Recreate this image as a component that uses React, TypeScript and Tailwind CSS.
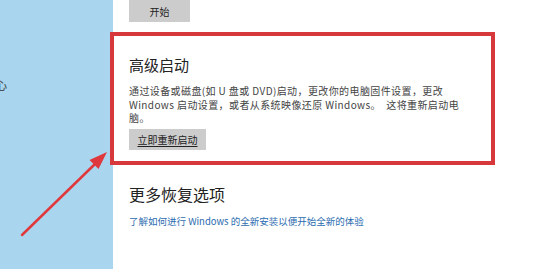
export default function App() {
  return (
    <div
      className="relative flex h-[269px] w-[560px] overflow-hidden bg-white text-[#333]"
      style={{ fontFamily: '"Noto Sans CJK SC", "Noto Sans", sans-serif' }}
    >
      {/* left nav */}
      <div className="w-[113px] shrink-0 bg-[#a9d5ee] pt-[78px]">
        <div className="-ml-[4px] text-[11px] leading-[14px] text-[#333]">心</div>
      </div>

      {/* settings content */}
      <div className="flex-1 pl-[16px]">
        <button className="flex h-[22px] w-[61px] items-center justify-center bg-[#cccccc] text-[10px] text-[#222]">
          开始
        </button>

        <div className="-ml-[19px] mt-[10px] w-[385px] border-[4px] border-[#d6383c] pb-[11px] pl-[15px] pt-[19px]">
          <h2 className="text-[15px] leading-[20px] text-[#222]">高级启动</h2>
          <p className="mt-[9px] whitespace-nowrap text-[10px] leading-[13.5px] tracking-[0.4px] text-[#444]">
            通过设备或磁盘(如 U 盘或 DVD)启动，更改你的电脑固件设置，更改
            <br />
            Windows 启动设置，或者从系统映像还原 Windows。&nbsp; 这将重新启动电
            <br />
            脑。
          </p>
          <button className="mt-[4px] flex h-[21px] w-[77px] items-center justify-center bg-[#cccccc] text-[10px] text-[#222] underline underline-offset-2">
            立即重新启动
          </button>
        </div>

        <h2 className="mt-[18px] text-[16px] leading-[22px] text-[#222]">更多恢复选项</h2>
        <a className="mt-[9px] block text-[9.5px] leading-[14px] text-[#2b6cb0]">
          了解如何进行 Windows 的全新安装以便开始全新的体验
        </a>
        <h2 className="mt-[37px] text-[16px] leading-[22px] text-[#222]">有疑问?</h2>
      </div>

      {/* annotation arrow */}
      <svg className="pointer-events-none absolute left-0 top-0" width="560" height="269">
        <line x1="22" y1="235" x2="95" y2="164" stroke="#e0393d" strokeWidth="2.5" strokeLinecap="round" />
        <polygon points="107,152 89.5,160 98.5,169" fill="#e0393d" />
      </svg>
    </div>
  );
}
